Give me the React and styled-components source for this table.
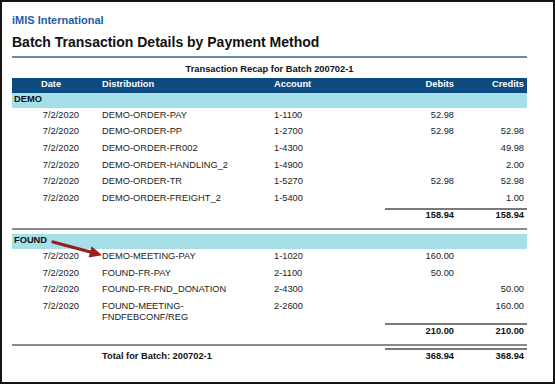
import React from "react";
import styled, { createGlobalStyle } from "styled-components";

const Global = createGlobalStyle`
  html, body { margin: 0; padding: 0; background: #fff; }
  body { font-family: "Liberation Sans", Arial, sans-serif; }
`;

const COLS = "78px 184px 111px 73px 69px";

const Frame = styled.div`
  position: relative;
  box-sizing: border-box;
  width: 555px;
  height: 384px;
  border: 2px solid #141414;
  background: #fff;
  padding: 12px 0 0 10px;
  overflow: hidden;
`;

const Company = styled.div`
  font-size: 11px;
  line-height: 12px;
  font-weight: 700;
  color: #1d5c9f;
`;

const Title = styled.h1`
  margin: 7.7px 0 0;
  font-size: 14px;
  line-height: 16px;
  font-weight: 700;
  color: #111;
`;

const TitleRule = styled.div`
  width: 515px;
  height: 2px;
  margin-top: 6.8px;
  background: #5f8dab;
`;

const Report = styled.div`
  width: 515px;
  font-size: 9.3px;
  color: #222;
`;

const Recap = styled.div`
  margin-top: 5.3px;
  line-height: 11px;
  font-weight: 700;
  text-align: center;
  color: #111;
`;

const HeaderBar = styled.div`
  display: grid;
  grid-template-columns: ${COLS};
  margin-top: 2.9px;
  height: 15px;
  line-height: 13px;
  background: #0d4a80;
  color: #fff;
  font-weight: 700;
`;

const Cell = styled.div`
  text-align: ${(p) => p.$align || "left"};
  padding-left: ${(p) => p.$pl || 0}px;
  padding-right: ${(p) => p.$pr || 0}px;
  white-space: ${(p) => (p.$wrap ? "normal" : "nowrap")};
`;

const GroupBar = styled.div`
  height: 15px;
  line-height: 13px;
  padding-left: 2px;
  background: #a6dfe8;
  font-weight: 700;
  color: #111;
`;

const Row = styled.div`
  display: grid;
  grid-template-columns: ${COLS};
  box-sizing: border-box;
  min-height: 16.67px;
  padding: 2px 0 0.8px;
  line-height: 10.6px;
`;

const TotalRow = styled.div`
  display: grid;
  grid-template-columns: ${COLS};
  box-sizing: border-box;
  height: ${(p) => p.$h}px;
  line-height: 10.6px;
  font-weight: 700;
  color: #111;
  margin-top: ${(p) => p.$mt || 0}px;
`;

const TotalCell = styled(Cell)`
  border-top: 2px solid #7a7a7a;
  padding-top: 0.5px;
`;

const PlainTotalCell = styled(Cell)`
  padding-top: 2.5px;
`;

const FullRule = styled.div`
  height: 2px;
  background: #8a8a8a;
`;

const GroupGap = styled.div`
  height: 4px;
`;

const Arrow = styled.svg`
  position: absolute;
  left: 48px;
  top: 234px;
  overflow: visible;
`;

const groups = [
  {
    name: "DEMO",
    rows: [
      ["DEMO-ORDER-PAY", "1-1100", "52.98", ""],
      ["DEMO-ORDER-PP", "1-2700", "52.98", "52.98"],
      ["DEMO-ORDER-FR002", "1-4300", "", "49.98"],
      ["DEMO-ORDER-HANDLING_2", "1-4900", "", "2.00"],
      ["DEMO-ORDER-TR", "1-5270", "52.98", "52.98"],
      ["DEMO-ORDER-FREIGHT_2", "1-5400", "", "1.00"],
    ],
    total: ["158.94", "158.94"],
  },
  {
    name: "FOUND",
    rows: [
      ["DEMO-MEETING-PAY", "1-1020", "160.00", ""],
      ["FOUND-FR-PAY", "2-1100", "50.00", ""],
      ["FOUND-FR-FND_DONATION", "2-4300", "", "50.00"],
      ["FOUND-MEETING-FNDFEBCONF/REG", "2-2600", "", "160.00"],
    ],
    total: ["210.00", "210.00"],
  },
];

function Group({ g, last }) {
  return (
    <>
      <GroupBar>{g.name}</GroupBar>
      {g.rows.map((r, i) => (
        <Row key={i}>
          <Cell $align="right" $pr={11}>7/2/2020</Cell>
          <Cell $pl={12} $pr={30} $wrap>{r[0]}</Cell>
          <Cell>{r[1]}</Cell>
          <Cell $align="right" $pr={4}>{r[2]}</Cell>
          <Cell $align="right" $pr={3}>{r[3]}</Cell>
        </Row>
      ))}
      <TotalRow $h={last ? 20.5 : 20.5}>
        <Cell />
        <Cell />
        <Cell />
        <TotalCell $align="right" $pr={4}>{g.total[0]}</TotalCell>
        <TotalCell $align="right" $pr={3}>{g.total[1]}</TotalCell>
      </TotalRow>
      <FullRule />
      {!last && <GroupGap />}
    </>
  );
}

export default function App() {
  return (
    <>
      <Global />
      <Frame>
        <Company>iMIS International</Company>
        <Title>Batch Transaction Details by Payment Method</Title>
        <TitleRule />
        <Report>
          <Recap>Transaction Recap for Batch 200702-1</Recap>
          <HeaderBar>
            <Cell $align="center">Date</Cell>
            <Cell $pl={12}>Distribution</Cell>
            <Cell>Account</Cell>
            <Cell $align="right" $pr={4}>Debits</Cell>
            <Cell $align="right" $pr={3}>Credits</Cell>
          </HeaderBar>
          {groups.map((g, i) => (
            <Group key={g.name} g={g} last={i === groups.length - 1} />
          ))}
          <TotalRow $h={20} $mt={2.7}>
            <Cell />
            <PlainTotalCell $pl={12}>Total for Batch: 200702-1</PlainTotalCell>
            <Cell />
            <TotalCell $align="right" $pr={4}>368.94</TotalCell>
            <TotalCell $align="right" $pr={3}>368.94</TotalCell>
          </TotalRow>
        </Report>
        <Arrow width="56" height="26" viewBox="0 0 56 26">
          <line x1="3" y1="6" x2="40.5" y2="16" stroke="#9e1b20" strokeWidth="3.2" strokeLinecap="round" />
          <polygon points="52,19.3 38.6,21.6 41.6,10.2" fill="#9e1b20" />
        </Arrow>
      </Frame>
    </>
  );
}
